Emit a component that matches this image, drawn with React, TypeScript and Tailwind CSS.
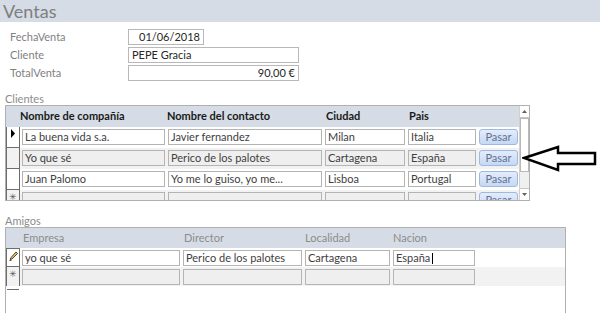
const font = "font-['Lato','Liberation_Sans',sans-serif]";

function Field({ label, value, w, align = "left" }: { label: string; value: string; w: string; align?: "left" | "right" }) {
  return (
    <div className="flex items-center h-[16px]">
      <div className="w-[128px] pl-[10px] text-[11px] text-[#7f7f7f]">{label}</div>
      <div
        className={`${w} h-[16px] border border-[#b8b8b8] bg-white text-[11px] text-[#262626] px-[3px] leading-[14px] ${
          align === "right" ? "text-right" : ""
        }`}
      >
        {value}
      </div>
    </div>
  );
}

function Cell({ text = "", w, gray = false }: { text?: string; w: string; gray?: boolean }) {
  return (
    <div
      className={`${w} h-[16px] shrink-0 border border-[#b4b4b4] ${
        gray ? "bg-[#efefef]" : "bg-white"
      } text-[11px] text-[#404040] px-[2px] leading-[14px] whitespace-nowrap overflow-hidden`}
    >
      {text}
    </div>
  );
}

function PasarBtn() {
  return (
    <div className="w-[39px] h-[16px] shrink-0 ml-[3px] rounded-[3px] border border-[#9fb8df] bg-gradient-to-b from-[#e3ecfb] to-[#c6d8f4] text-[11px] text-[#62738f] text-center leading-[14px]">
      Pasar
    </div>
  );
}

function Selector({ kind, h }: { kind?: "arrow" | "star" | "pencil"; h: string }) {
  return (
    <div className={`w-[12px] ${h} shrink-0 border-b border-[#6d6d6d] flex justify-center items-start pt-[2px]`}>
      {kind === "arrow" && (
        <svg width="6" height="9" viewBox="0 0 6 9">
          <path d="M1 0 L5 4.5 L1 9 Z" fill="#000" />
        </svg>
      )}
      {kind === "star" && <span className="text-[9px] leading-[9px] text-[#555]">✳</span>}
      {kind === "pencil" && (
        <svg width="9" height="10" viewBox="0 0 9 10">
          <path d="M7 1 L8.5 2.5 L3 8 L1.2 8.6 L1.8 6.8 Z" fill="#e7c64a" stroke="#222" strokeWidth="0.8" />
          <path d="M0.5 9.5 L2.5 9.5" stroke="#333" strokeWidth="0.8" />
        </svg>
      )}
    </div>
  );
}

const clientes = [
  { c: "La buena vida s.a.", n: "Javier fernandez", ci: "Milan", p: "Italia", sel: "arrow" as const },
  { c: "Yo que sé", n: "Perico de los palotes", ci: "Cartagena", p: "España", gray: true },
  { c: "Juan Palomo", n: "Yo me lo guiso, yo me...", ci: "Lisboa", p: "Portugal" },
  { c: "", n: "", ci: "", p: "", gray: true, sel: "star" as const },
];

export default function App() {
  return (
    <div className={`relative w-[600px] h-[313px] overflow-hidden bg-white ${font}`}>
      {/* Title band */}
      <div className="h-[22px] bg-[#d6dce5] pl-[3px] text-[18px] leading-[22px] text-[#7f7f7f]">Ventas</div>

      {/* Main fields */}
      <div className="mt-[7px] flex flex-col gap-[2px]">
        <Field label="FechaVenta" value="01/06/2018" w="w-[76px]" align="right" />
        <Field label="Cliente" value="PEPE Gracia" w="w-[171px]" />
        <Field label="TotalVenta" value="90,00 €" w="w-[171px]" align="right" />
      </div>

      {/* Clientes subform */}
      <div className="mt-[12px] ml-[5px] text-[11px] leading-[11px] text-[#8c8c8c]">Clientes</div>
      <div className="ml-[5px] mt-[1px] w-[525px] h-[96px] border border-[#b0b0b0] flex overflow-hidden">
        <div className="flex-1 flex flex-col">
          <div className="h-[21px] shrink-0 bg-[#d6dce5] flex items-center text-[11px] font-bold text-[#1a1a1a]">
            <div className="w-[14px]" />
            <div className="w-[147px]">Nombre de compañía</div>
            <div className="w-[159px]">Nombre del contacto</div>
            <div className="w-[83px]">Ciudad</div>
            <div>Pais</div>
          </div>
          {clientes.map((r, i) => (
            <div key={i} className={`h-[21px] shrink-0 flex ${r.gray ? "bg-[#f2f2f2]" : "bg-white"}`}>
              <div className="border-x border-[#6d6d6d] h-[21px]">
                <Selector kind={r.sel} h="h-[21px]" />
              </div>
              <div className="flex gap-[3px] pt-[2px] pl-[2px]">
                <Cell text={r.c} w="w-[143px]" gray={r.gray} />
                <Cell text={r.n} w="w-[154px]" gray={r.gray} />
                <Cell text={r.ci} w="w-[80px]" gray={r.gray} />
                <Cell text={r.p} w="w-[68px]" gray={r.gray} />
              </div>
              <div className="pt-[2px]">
                <PasarBtn />
              </div>
            </div>
          ))}
        </div>
        {/* Scrollbar */}
        <div className="w-[10px] shrink-0 flex flex-col border-l border-[#d0d0d0] bg-[#f0f0f0]">
          <div className="h-[12px] bg-white border-b border-[#c8c8c8] flex items-center justify-center">
            <svg width="5" height="3" viewBox="0 0 5 3"><path d="M0 3 L2.5 0 L5 3 Z" fill="#606060" /></svg>
          </div>
          <div className="h-[54px] bg-white border border-[#b8b8b8]" />
          <div className="flex-1" />
          <div className="h-[12px] bg-white border-t border-[#c8c8c8] flex items-center justify-center">
            <svg width="5" height="3" viewBox="0 0 5 3"><path d="M0 0 L2.5 3 L5 0 Z" fill="#606060" /></svg>
          </div>
        </div>
      </div>

      {/* Amigos subform */}
      <div className="mt-[14px] ml-[5px] text-[11px] leading-[11px] text-[#8c8c8c]">Amigos</div>
      <div className="ml-[5px] mt-[1px] w-[561px] h-[100px] border border-[#b0b0b0] border-b-0">
        <div className="h-[20px] bg-[#d6dce5] flex items-center text-[11px] text-[#8c8c8c]">
          <div className="w-[17px]" />
          <div className="w-[161px]">Empresa</div>
          <div className="w-[121px]">Director</div>
          <div className="w-[88px]">Localidad</div>
          <div>Nacion</div>
        </div>
        {[
          { vals: ["yo que sé", "Perico de los palotes", "Cartagena", "España"], sel: "pencil" as const },
          { vals: ["", "", "", ""], gray: true, sel: "star" as const },
        ].map((r, i) => (
          <div key={i} className={`h-[19px] flex ${r.gray ? "bg-[#f2f2f2]" : "bg-white"}`}>
            <div className={`border-x border-[#6d6d6d] ${i === 0 ? "border-t" : ""}`}>
              <Selector kind={r.sel} h={i === 0 ? "h-[18px]" : "h-[23px]"} />
            </div>
            <div className="flex gap-[3px] pt-[2px] pl-[2px]">
              <Cell text={r.vals[0]} w="w-[158px]" gray={r.gray} />
              <Cell text={r.vals[1]} w="w-[119px]" gray={r.gray} />
              <Cell text={r.vals[2]} w="w-[85px]" gray={r.gray} />
              <div className="relative">
                <Cell text={r.vals[3]} w="w-[82px]" gray={r.gray} />
                {i === 0 && <div className="absolute left-[39px] top-[3px] w-px h-[11px] bg-black" />}
              </div>
            </div>
          </div>
        ))}
      </div>

      {/* Annotation arrow */}
      <svg className="absolute left-[522px] top-[145px]" width="76" height="27" viewBox="0 0 76 27">
        <path
          d="M2 13 L36 2 L36 8 L73 8 L73 19 L36 19 L36 25 Z"
          fill="#fff"
          stroke="#000"
          strokeWidth="2.5"
          strokeLinejoin="miter"
        />
      </svg>
    </div>
  );
}
